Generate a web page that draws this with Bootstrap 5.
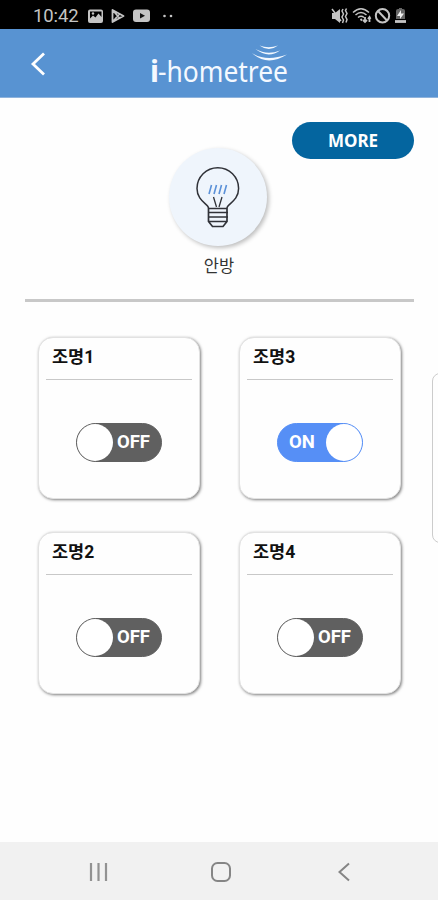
<!DOCTYPE html>
<html lang="ko">
<head>
<meta charset="utf-8">
<meta name="viewport" content="width=device-width, initial-scale=1">
<title>i-hometree</title>
<link href="https://cdn.jsdelivr.net/npm/bootstrap@5.3.0/dist/css/bootstrap.min.css" rel="stylesheet">
<style>
body{font-family:Roboto,"Noto Sans CJK KR",sans-serif;height:900px;overflow:hidden;background:#fefefe;color:#111}
svg{display:block;flex:none}
.statusbar{height:29px;background:#000;color:#c4c4c4;padding:3px 31px 0 33px}
.clock{font-size:18.5px;line-height:26px;width:54px;letter-spacing:-.1px}
.topbar{height:69px;background:#5893d2;border-bottom:1px solid #8fb3dc;padding-left:30px}
.topbar .brand{margin-left:93px;margin-top:11px;overflow:visible}
.topbar .back{margin-top:22px}
.brand text{font-family:"Noto Sans",sans-serif;fill:#f4f9ff}
.hero{height:204px;padding:24px 24px 0 25px}
.more{width:122px;height:37px;background:#04659f;color:#fff;font:700 17px/37px "Noto Sans",sans-serif;padding:0;border:0}
.more:hover{background:#04659f;color:#fff}
.bulb{width:98px;height:98px;background:#eff5fc;box-shadow:2px 2px 4px rgba(0,0,0,.25);margin-top:-11px;margin-right:4px}
.room{font-size:16.5px;line-height:20px;margin-top:11px;margin-right:1px;color:#333}
.rule{height:3px;background:#c8c8c8;margin:-3px 24px 0 25px}
.lights{display:grid;grid-template-columns:162px 162px;column-gap:39px;row-gap:33px;padding:35px 0 0 38px}
.light{height:162px;border:1px solid #e2e2e2;border-radius:15px;box-shadow:1px 1px 3px rgba(0,0,0,.5);background:#fefefe;padding:0 7px}
.light h2{font-size:17.5px;font-weight:700;line-height:38px;height:42px;margin:0;padding-left:6px;border-bottom:1.500px solid #c8c8c8;color:#111}
.toggle{width:86px;height:39px;background:#606060;color:#fff;border:1px solid #606060;border-radius:20px;font-size:18.5px;font-weight:700;margin:43px auto 0;padding-right:11px}
.toggle span:not(.knob){padding-top:1px}
.toggle .knob{width:36px;height:37px;border-radius:50%;background:#fff}
.toggle.on{background:#568ff6;border-color:#568ff6;padding:0 0 0 11px}
.edge{position:absolute;left:432px;top:373px;width:20px;height:170px;border:1px solid #ccc;border-radius:8px;background:#fefefe}
.sysnav{height:58px;background:#f1f1f1;padding:2px 87px 0 88px}
.sysnav .home{margin-left:-6px}
</style>
<script src="https://cdn.jsdelivr.net/npm/bootstrap@5.3.0/dist/js/bootstrap.bundle.min.js"></script>
</head>
<body class="d-flex flex-column position-relative">
<div class="statusbar d-flex align-items-start justify-content-between">
  <div class="d-flex">
    <span class="clock">10:42</span>
    <svg width="90" height="26" viewBox="87 3 90 26">
      <path fill="#c4c4c4" fill-rule="evenodd" d="M90 9.500h11a2 2 0 0 1 2 2v9.500a2 2 0 0 1-2 2h-11a2 2 0 0 1-2-2v-9.500a2 2 0 0 1 2-2zM90 11.500v7l3-3 2.500 2 3-4 3 3.500v-5.500z"/>
      <circle cx="93" cy="13.500" r="1.200" fill="#c4c4c4"/>
      <path fill="none" stroke="#c4c4c4" stroke-width="1.800" stroke-linejoin="round" d="M112.500 10l11 6-11 6zM112.500 10l7 8M112.500 22l7-8"/>
      <rect x="133" y="9.500" width="17" height="12.500" rx="3" fill="#c4c4c4"/>
      <path fill="#111" d="M140 13l5 2.700-5 2.800z"/>
      <circle cx="164.500" cy="16" r="1.300" fill="#c4c4c4"/><circle cx="171" cy="16" r="1.300" fill="#c4c4c4"/>
    </svg>
  </div>
  <svg width="77" height="26" viewBox="330 3 77 26" fill="none" stroke="#c4c4c4" stroke-width="1.500">
    <path fill="#c4c4c4" stroke="none" d="M332 13h3l5-4v14l-5-4h-3z"/>
    <path d="M332 9l9 12M343 9l-1 2 1.500 3-1.500 3 1.500 3-1 3M346.500 8.500l-1 2 1.500 3-1.500 3 1.500 3-1 3"/>
    <path d="M353 12.500q8-7.500 16 0M355.500 15q5.500-5 11 0M358 17.500q3-2.500 6 0"/>
    <path stroke-width="1.800" d="M360.500 19l1.500 1.500M365 17v5m-2-2l2 2 2-2M369.500 22v-5m-1.500 2l1.500-2 1 2"/>
    <circle cx="382.500" cy="15.700" r="6.700" stroke-width="2"/><path stroke-width="2" d="M378 11l9 9.500"/>
    <path fill="#666" stroke="none" d="M396 19v-8q0-2 2-2h1v-1h3v1h1q2 0 2 2v8z"/>
    <path fill="#eee" stroke="none" d="M401 10l-4 6h3v3l4-5.500h-3z"/>
    <path stroke-width="2.800" d="M395 21.500h11"/>
  </svg>
</div>

<header class="topbar d-flex align-items-start">
  <svg class="back" width="17" height="25" viewBox="30 51 17 25" fill="none" stroke="#fff" stroke-width="2.800"><path d="M44 53.500L33 64l11 10.500"/></svg>
  <svg class="brand" width="160" height="56" viewBox="140 40 160 56">
    <text x="150" y="81.500" font-size="30" font-weight="700" textLength="9" lengthAdjust="spacingAndGlyphs">i</text>
    <text x="158" y="81.500" font-size="29" textLength="130" lengthAdjust="spacingAndGlyphs">-hometree</text>
    <g fill="#f4f9ff">
      <path d="M259.500 45.500q9 3.500 18.500 0-9 7-18.500 0z"/>
      <path d="M255.500 49q11.500 6.500 24.500 1.500-12 8.500-24.500-1.500z"/>
      <path d="M252 53q14 9 35 1.500-20 12.500-35-1.500z"/>
    </g>
  </svg>
</header>

<section class="hero d-flex flex-column align-items-center">
  <button class="btn more rounded-pill align-self-end" type="button">MORE</button>
  <div class="bulb rounded-circle d-flex justify-content-center align-items-center">
    <svg width="48" height="66" viewBox="194 164 48 66" fill="none" stroke="#303238" stroke-width="1.500">
      <path d="M208.500 208C208.500 204 197 201 197 188.500a20.800 20.800 0 0 1 41.600 0C238.600 201 227 204 227 208"/>
      <path d="M213.500 197l3 10M222 197l-3 10" stroke-width="1.300"/>
      <path d="M208.500 208.500h18.500v13l-4 5h-10.500l-4-5zM208 212.500h20M208 217h20M208.500 221.500h18.500" stroke-width="1.700"/>
      <path d="M209 194l2.500-9M214 194l2.500-9M219 194l2.500-9M224 194l2.500-9" stroke="#5b91d8" stroke-width="1.600"/>
    </svg>
  </div>
  <div class="room">안방</div>
</section>
<div class="rule"></div>

<main class="lights">
  <section class="light"><h2>조명1</h2><div class="toggle d-flex align-items-center justify-content-between"><span class="knob"></span><span>OFF</span></div></section>
  <section class="light"><h2>조명3</h2><div class="toggle on d-flex align-items-center justify-content-between"><span>ON</span><span class="knob"></span></div></section>
  <section class="light"><h2>조명2</h2><div class="toggle d-flex align-items-center justify-content-between"><span class="knob"></span><span>OFF</span></div></section>
  <section class="light"><h2>조명4</h2><div class="toggle d-flex align-items-center justify-content-between"><span class="knob"></span><span>OFF</span></div></section>
</main>
<div class="edge"></div>

<nav class="sysnav d-flex align-items-center justify-content-between mt-auto">
  <svg width="22" height="22" fill="none" stroke="#929292" stroke-width="2.200"><path d="M3 2v18M10.500 2v18M18 2v18"/></svg>
  <svg class="home" width="22" height="22" fill="none" stroke="#858585" stroke-width="2"><rect x="2" y="2" width="18" height="18" rx="5.500"/></svg>
  <svg width="14" height="22" fill="none" stroke="#858585" stroke-width="2"><path d="M12 2.500L2.500 11l9.500 8.500"/></svg>
</nav>
</body>
</html>
